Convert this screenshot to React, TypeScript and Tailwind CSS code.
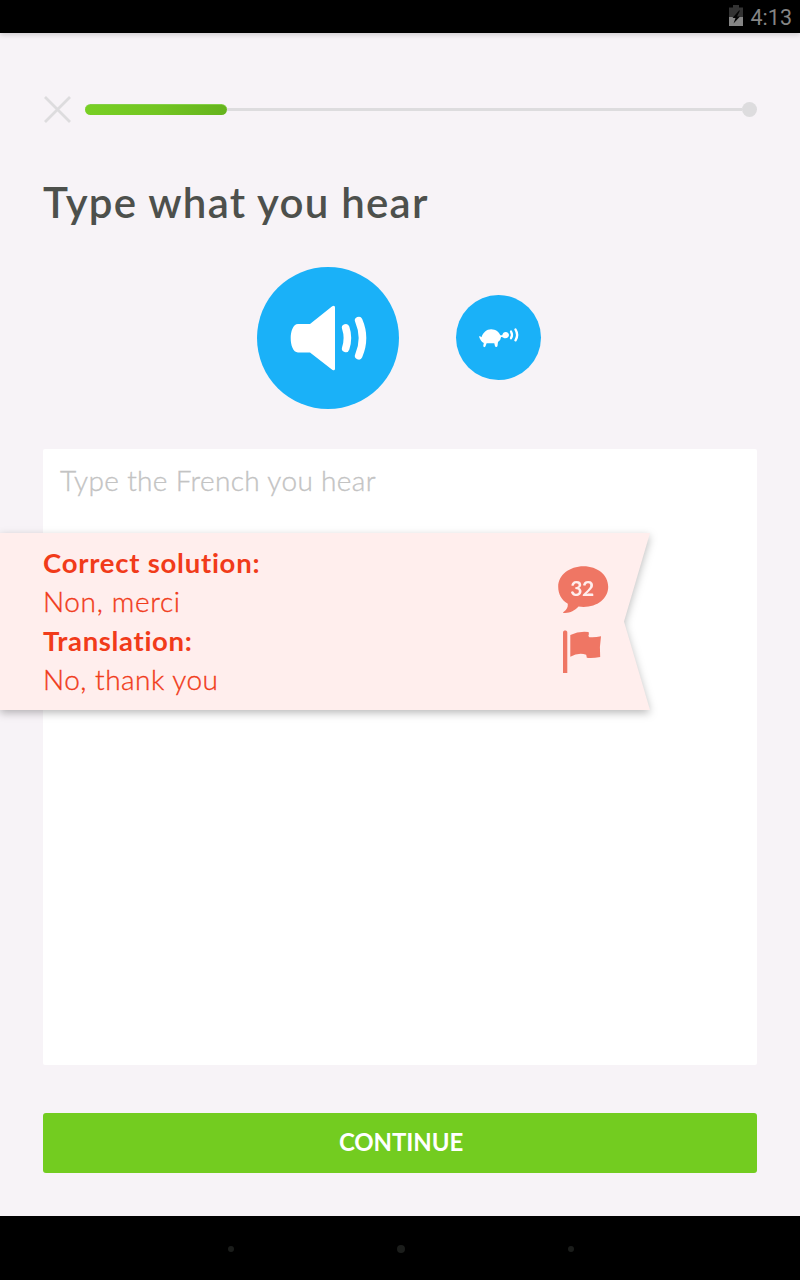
import React from "react";

function StatusBar() {
  return (
    <header className="z-10 flex h-[33px] shrink-0 items-center justify-end bg-black pr-2 shadow-[0_2px_5px_rgba(0,0,0,0.16)]">
      <svg className="mr-2 mb-0.5 h-[21px] w-3.5" viewBox="0 0 14 21" aria-hidden="true">
        <path d="M0 2.500h4V0h6v2.500h4V12H0z" fill="#333" />
        <path d="M0 12h14v9H0z" fill="#858585" />
        <path d="M10 5.500 3.500 13h3L4.500 18.500l6.500-7H8l3-6z" fill="#050505" />
      </svg>
      <span className="pt-0.5 font-['Roboto',sans-serif] text-[21.5px] leading-[31px] text-[#858585]">4:13</span>
    </header>
  );
}

function LessonProgress() {
  return (
    <div className="flex h-[27px] items-center">
      <svg className="h-[27px] w-7 shrink-0" viewBox="0 0 28 27" fill="none" stroke="#dddcde" strokeWidth="2.8" aria-label="Close">
        <path d="m2 1 25 25M27 1 2 26" />
      </svg>
      <div className="ml-3.5 h-[11px] w-[142px] rounded-full border-t border-[#83cf45] bg-linear-to-r from-[#78cf24] via-[#73c522] to-[#65b31d]" />
      <div className="h-[3px] flex-1 bg-[#dddcde]" />
      <div className="size-[15px] rounded-full bg-[#dddcde]" />
    </div>
  );
}

function SpeakerIcon() {
  return (
    <svg className="size-[142px]" viewBox="257 267 142 142" fill="white" aria-hidden="true">
      <path d="M298 324h12l22.2-17.8q2.8-1.6 2.8 1.4v60.8q0 3-2.8 1.4L310 352.500h-12c-5 0-7.300-7.500-7.300-14.200s2.300-14.300 7.300-14.300z" />
      <g fill="none" stroke="white" strokeWidth="7.6" strokeLinecap="round">
        <path d="M345.700 327.800q3.400 10.200 0 20.600" />
        <path d="M358.700 320.600q7.600 17.600 0 35.200" />
      </g>
    </svg>
  );
}

function TurtleIcon() {
  return (
    <svg className="size-[85px]" viewBox="456 295 85 85" fill="white" aria-hidden="true">
      <path d="M479 336.200q1.500-.3 2.500 1.100c1.500-4.800 5.100-8.100 9.600-8.100 4.700 0 8 2.900 9.300 6.100h1.800c.4-2.300 1.900-3.400 3.500-3.400 2 0 3.300 1.400 3.300 3.200 0 1.900-1.500 3.200-3.600 3.200-1.500 0-2.500-.8-3.200-1.300l-1.100.1q-.2 3-3.100 5l-.5 4q-.4 1.100-1.500.9-1.200-.2-1.100-1.300l-.6-2.500h-7.700l-1 2.800q-.3 1.300-1.500 1.100-1.200-.3-.8-1.600l.5-2.500q-3.700-2-4.800-6.800z" />
      <g fill="none" stroke="white" strokeLinecap="round">
        <path d="M511 331.500q2 3.500 0 6.700" strokeWidth="2.300" />
        <path d="M515.500 329.500q3.300 5.500 0 10.800" strokeWidth="2.400" />
      </g>
    </svg>
  );
}

function DiscussionIcon() {
  return (
    <div className="relative h-12 w-[51px]">
      <svg className="h-12 w-[51px]" viewBox="0 0 51 48" fill="#ef7664" aria-hidden="true">
        <path d="M25.500.2C39.500.2 50.200 9 50.200 20.700s-10.700 20.200-24.700 20.200q-2.300 0-5-.3c-4.200 4.400-9 7-15 6.400q-1-.4 0-1.100c3.300-2.100 4.600-4.700 4.300-8.100C3.700 34 .2 28.200.2 20.700.2 9 11.500.2 25.500.2z" />
      </svg>
      <span className="absolute inset-x-0 top-2.5 pr-[3px] text-center text-[21px] leading-6 font-bold tracking-[-0.5px] text-[#ffeeed]">32</span>
    </div>
  );
}

function FlagIcon() {
  return (
    <svg className="h-11 w-10" viewBox="0 0 40 44" fill="#ef7664" aria-hidden="true">
      <path d="M0 2.500C0-.1 4.300-.1 4.300 2.500V43H0z" />
      <path d="M7.300 5q9-4.200 18.300-2.900.7 2-.2 3.800l1 1.300q5.500.5 11.600-.9-1.700 10.500-.8 20.800-7.700 1.300-13.400.7l-.6-3.100q-7.800-2.400-15.900 2z" />
    </svg>
  );
}

function SolutionBanner() {
  return (
    <aside className="absolute top-[500px] left-0 h-[177px] w-[650px] drop-shadow-[0_3px_4px_rgba(0,0,0,0.27)]">
      <div className="flex h-full items-start justify-between bg-[#ffeeed] pr-[41px] pl-[43px] [clip-path:polygon(0_0,100%_0,624px_50%,100%_100%,0_100%)]">
        <div className="pt-2.5 text-[28px] leading-[39px] text-[#f13b1a]">
          <p className="text-[27.5px] font-bold tracking-[0.75px]">Correct solution:</p>
          <p className="font-light tracking-[0.65px] [-webkit-text-stroke:0.35px_#f13b1a]">Non, merci</p>
          <p className="text-[27.5px] font-bold tracking-[0.65px]">Translation:</p>
          <p className="font-light tracking-[0.5px] [-webkit-text-stroke:0.35px_#f13b1a]">No, thank you</p>
        </div>
        <div className="flex flex-col items-start gap-4 pt-[32.5px]">
          <DiscussionIcon />
          <div className="pl-[5px]"><FlagIcon /></div>
        </div>
      </div>
    </aside>
  );
}

export default function App() {
  return (
    <div className="flex h-[1280px] w-[800px] flex-col overflow-hidden bg-[#f7f3f7] font-['Lato',sans-serif]">
      <StatusBar />
      <main className="relative flex flex-1 flex-col px-[43px] pt-[63px] pb-[43px]">
        <LessonProgress />
        <h1 className="mt-[53px] h-[61px] text-[42px] leading-[52px] font-semibold tracking-[1.25px] whitespace-nowrap text-[#4d504c]">Type what you hear</h1>
        <div className="mt-[30px] flex h-[142px] items-center justify-center gap-[57px] pr-0.5">
          <button className="size-[142px] rounded-full bg-[#1ab1f8]"><SpeakerIcon /></button>
          <button className="mb-px size-[85px] rounded-full bg-[#1ab1f8]"><TurtleIcon /></button>
        </div>
        <textarea
          className="mt-10 h-[616px] w-full resize-none rounded-[2px] bg-white px-[17px] py-[11px] text-[28px] leading-[40px] font-light tracking-[0.35px] outline-none [-webkit-text-stroke:0.35px_#c3c3c3] placeholder:text-[#c3c3c3]"
          placeholder="Type the French you hear"
        />
        <button className="mt-12 h-[60px] rounded-[3px] bg-[#73cc20] pl-0.5 text-[24px] leading-[58px] font-bold tracking-[-0.1px] text-white">
          <span className="block h-[60px]">CONTINUE</span>
        </button>
        <SolutionBanner />
      </main>
      <nav className="flex h-16 shrink-0 items-center justify-between bg-black pt-px pr-[226px] pl-[228px]">
        <span className="size-1.5 rounded-full bg-[#1b1d1b]" />
        <span className="size-2 rounded-full bg-[#1b1d1b]" />
        <span className="size-1.5 rounded-full bg-[#1b1d1b]" />
      </nav>
    </div>
  );
}
